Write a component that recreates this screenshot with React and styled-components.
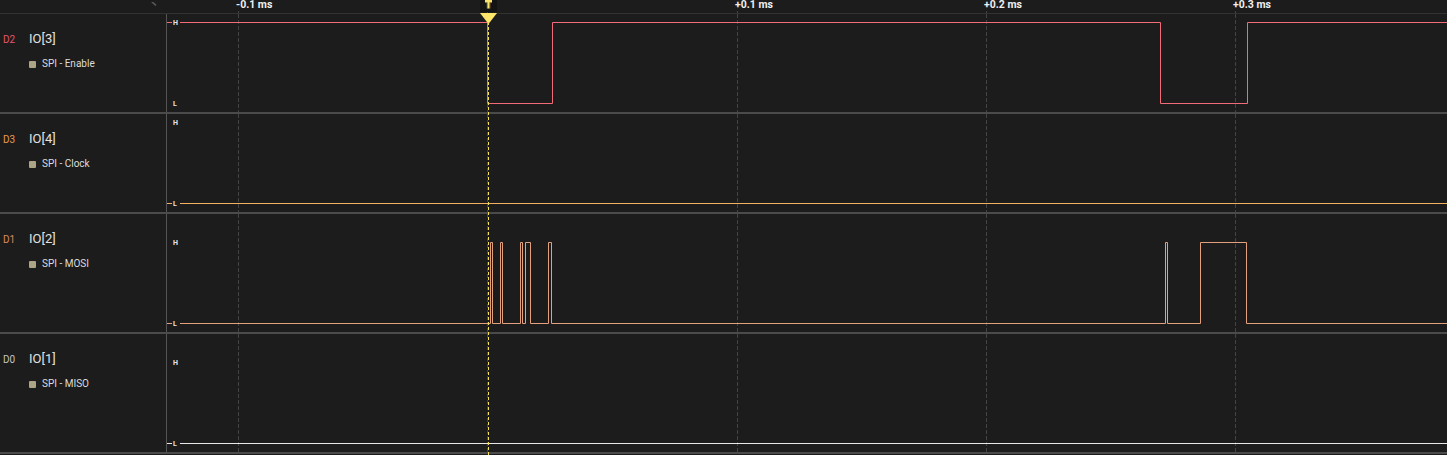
import React from "react";
import styled, { createGlobalStyle } from "styled-components";

const GlobalStyle = createGlobalStyle`
  html, body {
    margin: 0;
    padding: 0;
    background: #1c1c1c;
  }
  body {
    font-family: Roboto, "Liberation Sans", sans-serif;
  }
`;

const TRACE_W = 1280;
// trace-local pixel columns of the time grid (-0.1 .. +0.3 ms)
const GRID = [71, 320, 570, 819, 1068];
const TICKS = [
  { x: 71, text: "-0.1 ms" },
  { x: 570, text: "+0.1 ms" },
  { x: 819, text: "+0.2 ms" },
  { x: 1068, text: "+0.3 ms" },
];

const CHANNELS = [
  {
    tag: "D2",
    tagColor: "#e5566b",
    name: "IO[3]",
    label: "SPI - Enable",
    stroke: "#f26b79",
    height: 98,
    high: true,
    edges: [320, 385, 993, 1080],
  },
  {
    tag: "D3",
    tagColor: "#e89a4c",
    name: "IO[4]",
    label: "SPI - Clock",
    stroke: "#f2b060",
    height: 98,
    high: false,
    edges: [],
  },
  {
    tag: "D1",
    tagColor: "#dc8a5c",
    name: "IO[2]",
    label: "SPI - MOSI",
    stroke: "#e2a07c",
    height: 118,
    high: false,
    edges: [323, 325, 333, 335, 353, 355, 358, 363, 381, 384, 998, 1000, 1033, 1079],
  },
  {
    tag: "D0",
    tagColor: "#c4c4c4",
    name: "IO[1]",
    label: "SPI - MISO",
    stroke: "#e8e8e8",
    height: 118,
    high: false,
    edges: [],
  },
];

const Viewer = styled.div`
  position: relative;
  width: 1447px;
  height: 455px;
  overflow: hidden;
  background: #1c1c1c;
  color: #dedede;
`;

const Ruler = styled.div`
  display: grid;
  grid-template-columns: 167px 1fr;
  height: 13px;
  border-bottom: 1px solid #323232;
`;

const RulerCorner = styled.div`
  position: relative;
  overflow: hidden;
`;

const Scale = styled.div`
  position: relative;
  overflow: hidden;
`;

const Tick = styled.span`
  position: absolute;
  top: 0;
  font-size: 10.5px;
  line-height: 9px;
  font-weight: 700;
  color: #f0f0f0;
  white-space: nowrap;
`;

const Channel = styled.div`
  display: grid;
  grid-template-columns: 167px 1fr;
  height: ${(p) => p.$h}px;
  border-bottom: 2px solid #4b4b4b;
`;

const Label = styled.div`
  border-right: 1px solid #555;
  padding: 17px 0 0 3px;
  display: flex;
  flex-direction: column;
`;

const NameRow = styled.div`
  display: flex;
  align-items: baseline;
  line-height: 16px;
`;

const Tag = styled.span`
  width: 26px;
  font-size: 10px;
  color: ${(p) => p.$color};
`;

const Name = styled.span`
  font-size: 13px;
  color: #e2e2e2;
`;

const Sub = styled.div`
  display: flex;
  align-items: center;
  gap: 6px;
  margin: 10px 0 0 26px;
  font-size: 10px;
  line-height: 12px;
  color: #dcdcdc;
`;

const Swatch = styled.span`
  width: 7px;
  height: 7px;
  border-radius: 1px;
  background: #aca487;
`;

const Trace = styled.div`
  overflow: hidden;
`;

const Cursor = styled.svg`
  position: absolute;
  left: 479px;
  top: 0;
  pointer-events: none;
`;

function wavePath(ch) {
  const low = ch.height - 8.5;
  const high = low - 81;
  let level = ch.high;
  let d = `M0 ${level ? high : low}`;
  ch.edges.forEach((x) => {
    const y1 = level ? high : low;
    level = !level;
    const y2 = level ? high : low;
    d += ` L${x + 0.5} ${y1} L${x + 0.5} ${y2}`;
  });
  d += ` L${TRACE_W} ${level ? high : low}`;
  return d;
}

function LevelMark({ y, text }) {
  return (
    <g>
      <rect x="5" y={y - 4.5} width="8" height="9" fill="#1c1c1c" />
      <text
        x="6"
        y={y + 2.5}
        fontSize="7"
        fontWeight="700"
        fill="#e6e6e6"
        fontFamily="Roboto, 'Liberation Sans', sans-serif"
      >
        {text}
      </text>
    </g>
  );
}

function Waveform({ ch }) {
  const low = ch.height - 8.5;
  const high = low - 81;
  return (
    <svg width={TRACE_W} height={ch.height}>
      {GRID.map((x) => (
        <line
          key={x}
          x1={x + 0.5}
          x2={x + 0.5}
          y1="0"
          y2={ch.height}
          stroke="#444"
          strokeDasharray="4 2"
        />
      ))}
      <path d={wavePath(ch)} fill="none" stroke={ch.stroke} strokeWidth="1" />
      <LevelMark y={high} text="H" />
      <LevelMark y={low} text="L" />
    </svg>
  );
}

export default function App() {
  return (
    <>
      <GlobalStyle />
      <Viewer>
        <Ruler>
          <RulerCorner>
            <svg width="167" height="13">
              <path d="M150 -2 L156 3.5" stroke="#5a5a5a" strokeWidth="1.6" />
            </svg>
          </RulerCorner>
          <Scale>
            <svg width={TRACE_W} height="13">
              {GRID.map((x) => (
                <line
                  key={x}
                  x1={x + 0.5}
                  x2={x + 0.5}
                  y1="9"
                  y2="13"
                  stroke="#444"
                  strokeDasharray="3 1"
                />
              ))}
            </svg>
            {TICKS.map((t) => (
              <Tick key={t.text} style={{ left: t.x - 2 }}>
                {t.text}
              </Tick>
            ))}
          </Scale>
        </Ruler>

        {CHANNELS.map((ch) => (
          <Channel key={ch.tag} $h={ch.height}>
            <Label>
              <NameRow>
                <Tag $color={ch.tagColor}>{ch.tag}</Tag>
                <Name>{ch.name}</Name>
              </NameRow>
              <Sub>
                <Swatch />
                {ch.label}
              </Sub>
            </Label>
            <Trace>
              <Waveform ch={ch} />
            </Trace>
          </Channel>
        ))}

        <Cursor width="19" height="455">
          <rect x="1" y="0" width="17" height="12" fill="#131313" />
          <rect x="6" y="0" width="7" height="2.5" fill="#f6e16a" />
          <rect x="8.5" y="1" width="2" height="7.5" fill="#f6e16a" />
          <rect x="7.8" y="2.5" width="0.8" height="6" fill="#8fd66f" opacity="0.8" />
          <rect x="10.5" y="2.5" width="0.8" height="6" fill="#e9963f" opacity="0.8" />
          <path d="M1 13 L18 13 L9.5 24 Z" fill="#fde56a" />
          <line
            x1="9.5"
            x2="9.5"
            y1="22"
            y2="455"
            stroke="#f6e35a"
            strokeDasharray="3 2"
          />
        </Cursor>
      </Viewer>
    </>
  );
}
